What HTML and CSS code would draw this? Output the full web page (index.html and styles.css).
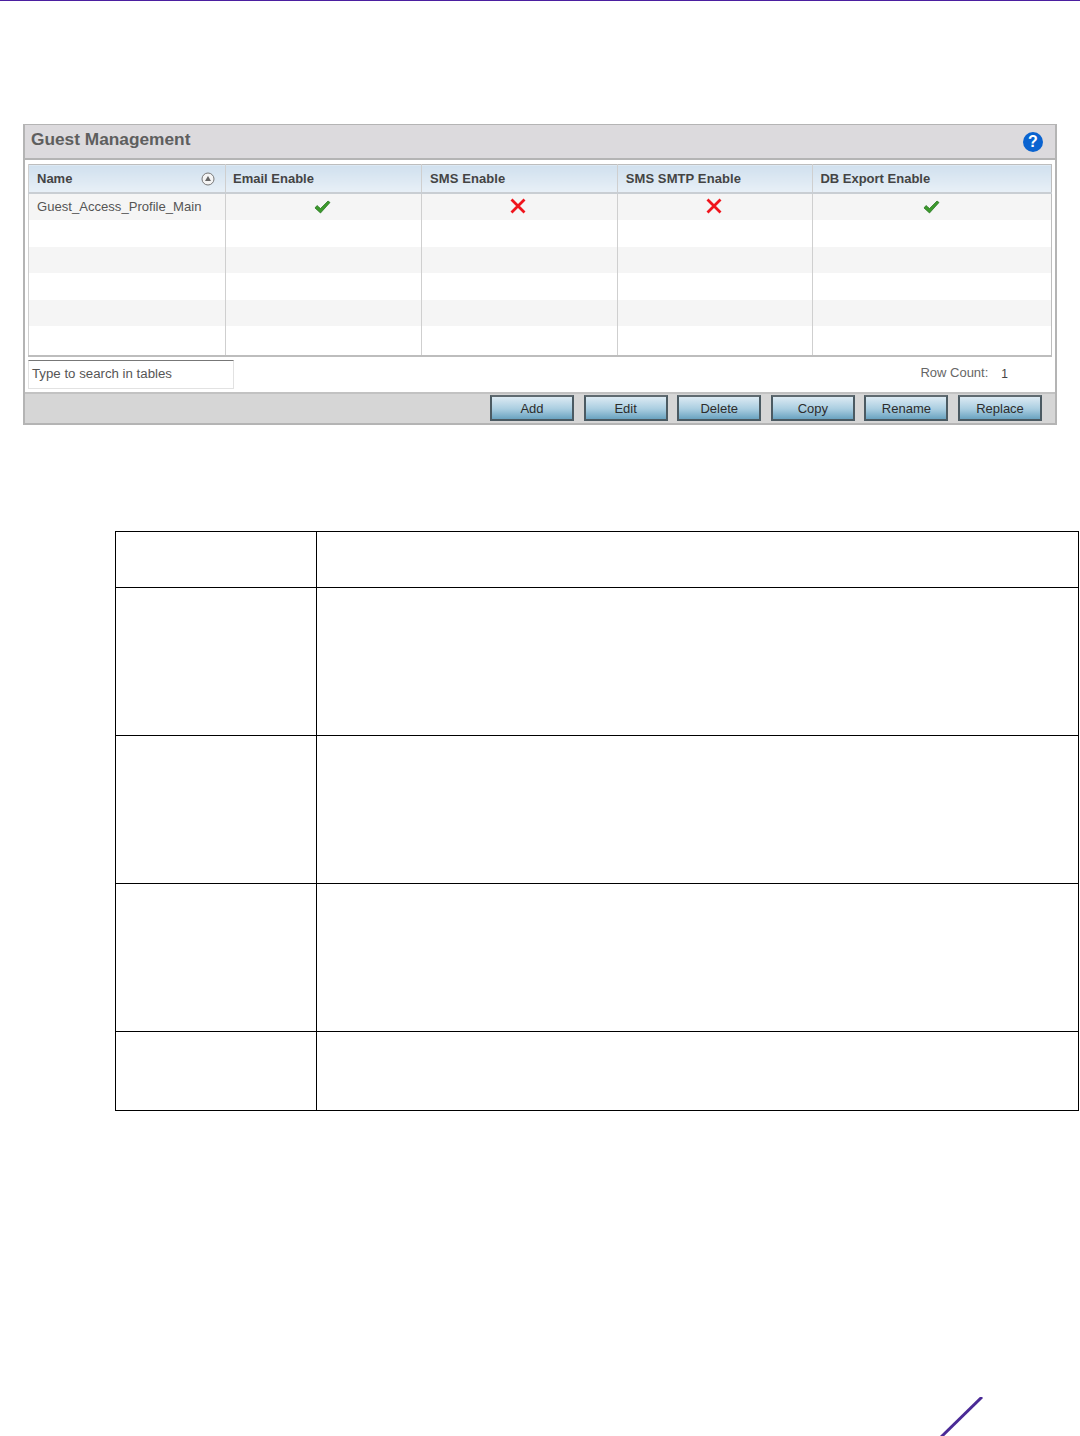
FILE: index.html
```html
<!DOCTYPE html>
<html lang="en">
<head>
<meta charset="utf-8">
<title>Guest Management</title>
<link rel="stylesheet" href="styles.css">
</head>
<body>
<div class="top-rule"></div>
<section class="panel">
  <header class="panel-head">
    <h1>Guest Management</h1>
    <span class="help">?</span>
  </header>
  <div class="panel-body">
    <table class="grid">
      <colgroup><col class="c1"><col class="c2"><col class="c3"><col class="c4"><col class="c5"></colgroup>
      <thead>
        <tr>
          <th><div class="name-head"><span>Name</span>
            <svg class="sort" width="14" height="14" viewBox="0 0 14 14"><circle cx="7" cy="7" r="6" fill="#f4f4f4" stroke="#777"/><path d="M7 4 10 9H4Z" fill="#666"/></svg>
          </div></th>
          <th>Email Enable</th>
          <th class="sp">SMS Enable</th>
          <th class="sp">SMS SMTP Enable</th>
          <th class="db">DB Export Enable</th>
        </tr>
      </thead>
      <tbody>
        <tr class="r1">
          <td class="name">Guest_Access_Profile_Main</td>
          <td class="icon"><svg class="ok" width="17" height="14" viewBox="0 0 17 14"><path d="M1 8 3 5.500 6.500 8.500 14 1 16 2.500 6.500 13Z" fill="#3c9a2c" stroke="#1f6d1a" stroke-width=".7"/></svg></td>
          <td class="icon"><svg class="no" width="18" height="16" viewBox="0 0 18 16"><path d="M2.500 1.500 15.500 14.500M15.500 1.500 2.500 14.500" stroke="#f0141c" stroke-width="2.800"/></svg></td>
          <td class="icon"><svg class="no" width="18" height="16" viewBox="0 0 18 16"><path d="M2.500 1.500 15.500 14.500M15.500 1.500 2.500 14.500" stroke="#f0141c" stroke-width="2.800"/></svg></td>
          <td class="icon"><svg class="ok" width="17" height="14" viewBox="0 0 17 14"><path d="M1 8 3 5.500 6.500 8.500 14 1 16 2.500 6.500 13Z" fill="#3c9a2c" stroke="#1f6d1a" stroke-width=".7"/></svg></td>
        </tr>
        <tr class="r2"><td></td><td></td><td></td><td></td><td></td></tr>
        <tr class="r3"><td></td><td></td><td></td><td></td><td></td></tr>
        <tr class="r4"><td></td><td></td><td></td><td></td><td></td></tr>
        <tr class="r5"><td></td><td></td><td></td><td></td><td></td></tr>
        <tr class="r6"><td></td><td></td><td></td><td></td><td></td></tr>
      </tbody>
    </table>
    <div class="tools">
      <div class="search">Type to search in tables</div>
      <div class="count"><span>Row Count:</span><span class="num">1</span></div>
    </div>
  </div>
  <footer class="panel-foot">
    <button>Add</button><button>Edit</button><button>Delete</button><button>Copy</button><button>Rename</button><button>Replace</button>
  </footer>
</section>

<div class="doc">
  <div class="doc-row h1"><div class="doc-a"></div><div class="doc-b"></div></div>
  <div class="doc-row h2"><div class="doc-a"></div><div class="doc-b"></div></div>
  <div class="doc-row h2"><div class="doc-a"></div><div class="doc-b"></div></div>
  <div class="doc-row h2"><div class="doc-a"></div><div class="doc-b"></div></div>
  <div class="doc-row h3"><div class="doc-a"></div><div class="doc-b"></div></div>
</div>

<svg class="slash" width="44" height="40" viewBox="0 0 44 40"><path d="M42 0 1 40" stroke="#4a2a96" stroke-width="3" fill="none"/></svg>
</body>
</html>
```
FILE: styles.css
```css
* { box-sizing: border-box; }
html, body { margin: 0; padding: 0; }
body {
  position: relative;
  width: 1080px;
  height: 1436px;
  overflow: hidden;
  background: #fff;
  font-family: "Liberation Sans", Arial, sans-serif;
}
.top-rule { height: 1px; background: #4b1fa0; }

.panel {
  width: 1034px;
  height: 301px;
  margin: 123px 0 0 23px;
  border: 2px solid #b4b4b4;
  border-top-width: 1px;
  display: flex;
  flex-direction: column;
  background: #fff;
}
.panel-head {
  height: 35px;
  flex: none;
  background: #dcdadd;
  border-bottom: 2px solid #b4b4b4;
  display: flex;
  align-items: center;
  justify-content: space-between;
  padding: 0 12px 3px 6px;
}
.panel-head h1 {
  margin: -2px 0 0;
  font-size: 17.300px;
  font-weight: bold;
  color: #5e5e5e;
}
.help {
  width: 20px;
  height: 20px;
  margin-top: 4px;
  border-radius: 50%;
  background: #0a63d0;
  color: #fff;
  font-size: 16px;
  font-weight: bold;
  line-height: 20px;
  text-align: center;
}
.panel-body {
  flex: 1;
  min-height: 0;
  padding: 4px 3px 0 3px;
}
.grid {
  width: 1023px;
  table-layout: fixed;
  border-collapse: collapse;
  border: 1px solid #bdbdbd;
  border-bottom-width: 2px;
}
.c1 { width: 197px; }
.c2 { width: 196px; }
.c3, .c4 { width: 195.700px; }
.c5 { width: 238.600px; }
.grid th {
  height: 28px;
  padding: 0 7px;
  background: linear-gradient(#d0e0ee, #e8f0f7);
  border-left: 1px solid #cfcfcf;
  border-bottom: 2px solid #c9ced3;
  text-align: left;
  font-size: 13px;
  font-weight: bold;
  color: #444;
  white-space: nowrap;
}
.grid th:first-child { padding-left: 8px; padding-right: 10px; }
.grid th.sp { padding-left: 8px; letter-spacing: .1px; }
.grid th.db { padding-left: 7px; }
.name-head { display: flex; align-items: center; justify-content: space-between; }
.sort { display: block; margin-top: 2px; }
.grid td {
  padding: 0;
  border-left: 1px solid #cfcfcf;
}
.r1 td, .r2 td, .r4 td { height: 27px; }
.r3 td, .r5 td { height: 26px; }
.r6 td { height: 30px; }
.grid td.name {
  padding-left: 8px;
  font-size: 13.100px;
  color: #555;
  white-space: nowrap;
}
.grid td.icon svg { display: block; margin: 0 auto; }
.grid td.icon svg.ok { position: relative; left: -1px; }
.grid td.icon svg.no { position: relative; left: -1px; top: -1px; }
.r1 td, .r3 td, .r5 td { background: #f5f5f5; }
.r2 td, .r4 td, .r6 td { background: #fff; }

.tools {
  display: flex;
  justify-content: space-between;
  margin-top: 3px;
}
.search {
  width: 206px;
  height: 29px;
  padding: 5px 0 0 3px;
  border: 1px solid #e2e2e2;
  border-top: 1px solid #777;
  font-size: 13.250px;
  color: #555;
}
.count {
  display: flex;
  gap: 13px;
  padding: 5px 44px 0 0;
  font-size: 13px;
  color: #666;
}
.count .num { color: #444; padding-top: 2px; font-size: 12px; }

.panel-foot {
  height: 31px;
  flex: none;
  background: #d6d6d6;
  border-top: 2px solid #c2c2c2;
  display: flex;
  justify-content: flex-end;
  gap: 9.600px;
  padding: 1px 13px 0 0;
}
.panel-foot button {
  width: 84px;
  height: 26px;
  flex: none;
  padding: 0;
  border: 2px solid #4b5a62;
  border-top-color: #5f6a70;
  background: linear-gradient(#dceaf3, #a9cde0 55%, #6aa3c0);
  font: 13px "Liberation Sans", Arial, sans-serif;
  color: #2c2c2c;
}

.doc {
  width: 964px;
  margin: 106px 0 0 115px;
  border: 1px solid #000;
}
.doc-row { display: flex; border-bottom: 1px solid #000; }
.doc-row:last-child { border-bottom: 0; }
.h1 { height: 56px; }
.h2 { height: 148px; }
.h3 { height: 78px; }
.doc-a { width: 201px; border-right: 1px solid #000; }
.doc-b { flex: 1; }

.slash { position: absolute; left: 940px; top: 1397px; }
```
